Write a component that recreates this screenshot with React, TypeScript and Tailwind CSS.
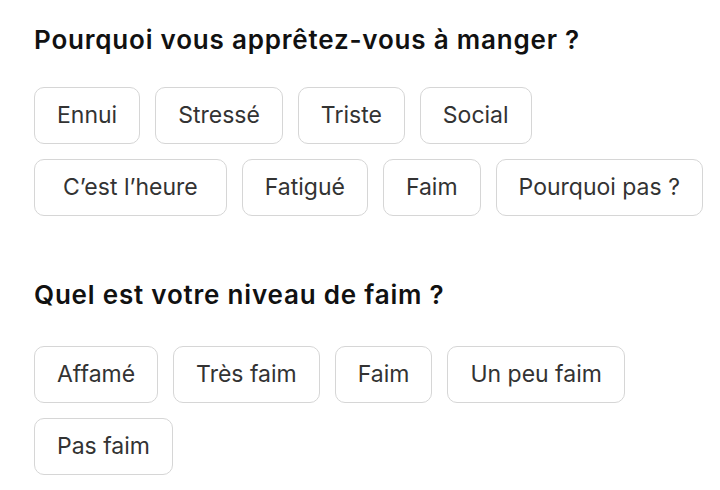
const REASONS = ['Ennui', 'Stressé', 'Triste', 'Social', 'C’est l’heure', 'Fatigué', 'Faim', 'Pourquoi pas ?'];
const HUNGER = ['Affamé', 'Très faim', 'Faim', 'Un peu faim', 'Pas faim'];

function Chip({ label }: { label: string }) {
  // apostrophes render narrower than in the original font, so pad those labels a bit more
  const pad = label.includes('’') ? 'px-[28px]' : 'px-[22px]';
  return (
    <button
      type="button"
      className={`flex h-[57px] items-center rounded-[10px] border border-[#d6d6d6] bg-white ${pad} text-[23px] text-[#333333]`}
    >
      {label}
    </button>
  );
}

function Section({ title, options, gapClass }: { title: string; options: string[]; gapClass: string }) {
  return (
    <section>
      <h2 className="text-[26px] font-semibold leading-[32px] tracking-[0.8px] text-[#111111]">{title}</h2>
      <div className={`${gapClass} flex flex-wrap gap-[15px]`}>
        {options.map((o) => (
          <Chip key={o} label={o} />
        ))}
      </div>
    </section>
  );
}

export default function App() {
  return (
    <div className="min-h-[490px] w-[720px] bg-white pl-[34px] pr-[14px] pt-[24px] font-['Inter',sans-serif]">
      <Section title="Pourquoi vous apprêtez-vous à manger ?" options={REASONS} gapClass="mt-[31px]" />
      <div className="h-[63px]" />
      <Section title="Quel est votre niveau de faim ?" options={HUNGER} gapClass="mt-[35px]" />
    </div>
  );
}
